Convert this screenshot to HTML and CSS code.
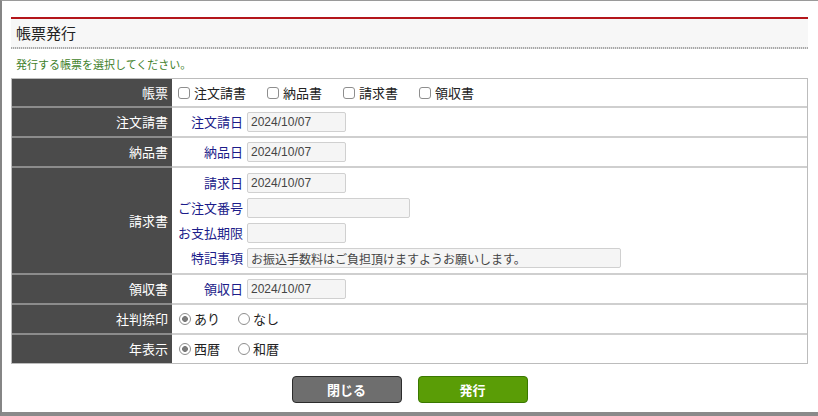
FILE: index.html
```html
<!DOCTYPE html>
<html lang="ja">
<head>
<meta charset="utf-8">
<title>帳票発行</title>
<link rel="stylesheet" href="styles.css">
</head>
<body>
<div class="window">
  <div class="header"><h1 class="title">帳票発行</h1></div>
  <p class="lead">発行する帳票を選択してください。</p>
  <div class="form">
    <div class="row r-first">
      <div class="label">帳票</div>
      <div class="cell">
        <label class="opt chk"><input type="checkbox"><span>注文請書</span></label>
        <label class="opt chk"><input type="checkbox"><span>納品書</span></label>
        <label class="opt chk"><input type="checkbox"><span>請求書</span></label>
        <label class="opt chk"><input type="checkbox"><span>領収書</span></label>
      </div>
    </div>
    <div class="row">
      <div class="label">注文請書</div>
      <div class="cell">
        <div class="field"><span class="sub">注文請日</span><input class="inp w-date" type="text" value="2024/10/07"></div>
      </div>
    </div>
    <div class="row">
      <div class="label">納品書</div>
      <div class="cell">
        <div class="field"><span class="sub">納品日</span><input class="inp w-date" type="text" value="2024/10/07"></div>
      </div>
    </div>
    <div class="row">
      <div class="label">請求書</div>
      <div class="cell stack">
        <div class="field"><span class="sub">請求日</span><input class="inp w-date" type="text" value="2024/10/07"></div>
        <div class="field"><span class="sub">ご注文番号</span><input class="inp w-mid" type="text"></div>
        <div class="field"><span class="sub">お支払期限</span><input class="inp w-date" type="text"></div>
        <div class="field"><span class="sub">特記事項</span><input class="inp w-long" type="text" value="お振込手数料はご負担頂けますようお願いします。"></div>
      </div>
    </div>
    <div class="row">
      <div class="label">領収書</div>
      <div class="cell">
        <div class="field"><span class="sub">領収日</span><input class="inp w-date" type="text" value="2024/10/07"></div>
      </div>
    </div>
    <div class="row">
      <div class="label">社判捺印</div>
      <div class="cell">
        <label class="opt rad"><input type="radio" name="stamp" checked><span>あり</span></label>
        <label class="opt rad"><input type="radio" name="stamp"><span>なし</span></label>
      </div>
    </div>
    <div class="row r-last">
      <div class="label">年表示</div>
      <div class="cell">
        <label class="opt rad"><input type="radio" name="era" checked><span>西暦</span></label>
        <label class="opt rad"><input type="radio" name="era"><span>和暦</span></label>
      </div>
    </div>
  </div>
  <div class="buttons">
    <button class="btn btn-close" type="button">閉じる</button>
    <button class="btn btn-issue" type="button">発行</button>
  </div>
</div>
</body>
</html>
```
FILE: styles.css
```css
html, body {
  margin: 0;
  padding: 0;
  background: #fff;
}
body {
  font-family: "Noto Sans CJK JP", "Liberation Sans", sans-serif;
  font-size: 13px;
  line-height: 16px;
  color: #222;
}
.window {
  width: 818px;
  height: 416px;
  box-sizing: border-box;
  border-top: 1px solid #9a9a9a;
  border-left: 2px solid #858585;
  border-bottom: 4px solid #8a8a8a;
  padding: 16px 10px 0 9px;
  overflow: hidden;
}
.header {
  border-top: 2px solid #b4161b;
  height: 28px;
  display: flex;
  align-items: center;
  padding-left: 5px;
  padding-bottom: 2px;
  background-color: #f7f7f7;
  background-image: repeating-linear-gradient(90deg, #a8a8a8 0 1px, #e2e2e2 1px 2px);
  background-size: 100% 2px;
  background-repeat: no-repeat;
  background-position: 0 100%;
}
.title {
  margin: 0;
  font-size: 15px;
  font-weight: normal;
  line-height: 18px;
  color: #222;
}
.lead {
  margin: 7px 0 6px 5px;
  font-size: 11px;
  line-height: 16px;
  color: #3f7f2a;
}
.form {
  border: 1px solid #bcbcbc;
}
.row {
  display: flex;
  border-bottom: 2px solid #cfcfcf;
}
.row.r-last {
  border-bottom: none;
}
.label {
  width: 160px;
  flex: none;
  background: #4b4b4b;
  color: #fff;
  padding-right: 4px;
  box-sizing: border-box;
  display: flex;
  align-items: center;
  justify-content: flex-end;
  box-shadow: 0 2px 0 #8c8c8c;
}
.row.r-last .label {
  box-shadow: none;
}
.cell {
  flex: 1;
  display: flex;
  align-items: center;
  padding: 4px 0 4px 6px;
  min-height: 20px;
}
.r-first .cell {
  padding: 4px 0 3px 6px;
}
.cell.stack {
  flex-direction: column;
  align-items: flex-start;
  gap: 5px;
  padding: 5px 0 5px 6px;
}
.field {
  display: flex;
  align-items: center;
}
.sub {
  width: 65px;
  text-align: right;
  margin-right: 4px;
  color: #1c1c8a;
  white-space: nowrap;
}
.inp {
  height: 20px;
  box-sizing: border-box;
  border: 1px solid #d0d0d0;
  border-radius: 2px;
  background: #f5f5f5;
  font-family: "Liberation Sans", "Noto Sans CJK JP", sans-serif;
  font-size: 12px;
  color: #444;
  padding: 0 3px;
  margin: 0;
  outline: none;
}
.w-date { width: 99px; }
.w-mid { width: 163px; }
.w-long { width: 374px; }
.opt {
  display: inline-flex;
  align-items: center;
}
.opt span {
  color: #222;
}
.opt.chk { margin-right: 21px; }
.opt.rad { margin-right: 17px; }
.opt input {
  appearance: none;
  -webkit-appearance: none;
  margin: 0 4px 0 0;
  width: 12px;
  height: 12px;
  border: 1px solid #8e8e8e;
  background: #fff;
  box-sizing: border-box;
  flex: none;
}
.opt.chk input {
  border-radius: 3px;
}
.opt.rad input {
  border-radius: 50%;
  margin-left: 1px;
  margin-right: 3px;
}
.opt.rad input:checked {
  background: radial-gradient(circle, #7a7a7a 0 2.6px, #fff 3.2px);
}
.buttons {
  display: flex;
  justify-content: center;
  gap: 16px;
  margin-top: 12px;
}
.btn {
  width: 110px;
  height: 27px;
  border-radius: 4px;
  font-family: "Noto Sans CJK JP", "Liberation Sans", sans-serif;
  font-size: 13px;
  font-weight: bold;
  color: #fff;
  padding: 0;
  cursor: pointer;
}
.btn-close {
  background: #6e6e6e;
  border: 1px solid #2c2c2c;
}
.btn-issue {
  background: #5a9d06;
  border: 1px solid #3a7800;
}
```
